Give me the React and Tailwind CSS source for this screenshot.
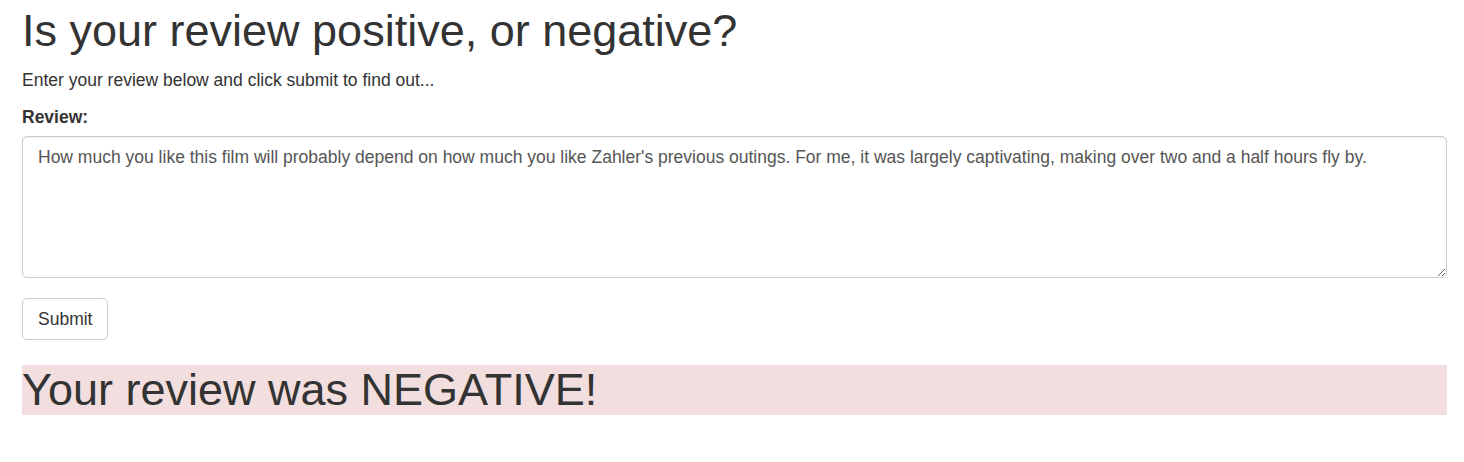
export default function App() {
  return (
    <div className="pl-[22px] pr-[17px] pt-[6px] text-[#333] text-[17.5px] leading-[25px] bg-white min-h-[462px]" style={{ fontFamily: '"Liberation Sans", Arial, sans-serif' }}>
      <h1 className="text-[45px] leading-[49.5px] mb-[12px] font-normal">Is your review positive, or negative?</h1>
      <p className="mb-[12.5px]">Enter your review below and click submit to find out...</p>
      <form className="block" onSubmit={(e) => e.preventDefault()}>
        <div className="mb-[20px]">
          <label className="inline-block font-bold mb-[6px]">Review:</label>
          <textarea
            className="block w-full h-[142px] px-[15px] py-[7.5px] border border-[#ccc] rounded-[5px] text-[#555] text-[17.5px] leading-[25px] shadow-[inset_0_1px_1px_rgba(0,0,0,0.075)] outline-none"
            style={{ fontFamily: '"Liberation Sans", Arial, sans-serif' }}
            defaultValue="How much you like this film will probably depend on how much you like Zahler's previous outings. For me, it was largely captivating, making over two and a half hours fly by."
          />
        </div>
        <button
          type="submit"
          className="h-[42px] px-[15px] border border-[#ccc] rounded-[5px] bg-white text-[#333] text-[17.5px] leading-[25px]"
          style={{ fontFamily: '"Liberation Sans", Arial, sans-serif' }}
        >
          Submit
        </button>
      </form>
      <h1 className="mt-[25px] bg-[#f2dede] text-[45px] leading-[49.5px] font-normal">Your review was NEGATIVE!</h1>
    </div>
  );
}
